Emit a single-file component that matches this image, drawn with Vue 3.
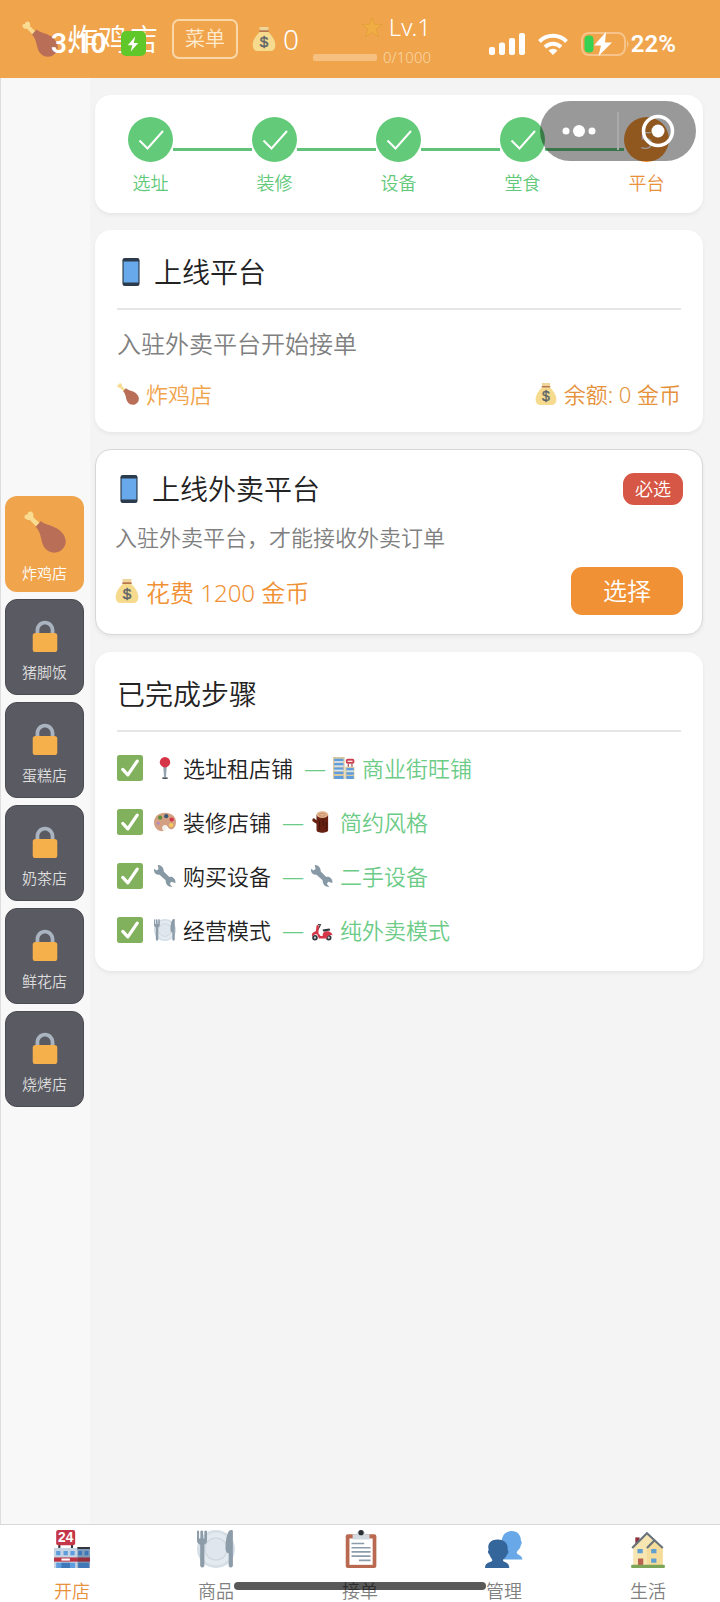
<script setup>
import { ref } from 'vue';

const shops = ref([
    { name: '炸鸡店', locked: false },
    { name: '猪脚饭', locked: true },
    { name: '蛋糕店', locked: true },
    { name: '奶茶店', locked: true },
    { name: '鲜花店', locked: true },
    { name: '烧烤店', locked: true },
]);

const steps = ref([
    { label: '选址', done: true },
    { label: '装修', done: true },
    { label: '设备', done: true },
    { label: '堂食', done: true },
    { label: '平台', done: false },
]);

const finished = ref([
    { icon: 'pin', title: '选址租店铺', choiceIcon: 'mall', choice: '商业街旺铺' },
    { icon: 'palette', title: '装修店铺', choiceIcon: 'wood', choice: '简约风格' },
    { icon: 'wrench', title: '购买设备', choiceIcon: 'wrench', choice: '二手设备' },
    { icon: 'plate', title: '经营模式', choiceIcon: 'scooter', choice: '纯外卖模式' },
]);

const tabs = [
    { icon: 'store', label: '开店' },
    { icon: 'plate', label: '商品' },
    { icon: 'clipboard', label: '接单' },
    { icon: 'people', label: '管理' },
    { icon: 'house', label: '生活' },
];
const activeTab = ref('开店');
</script>

<template>
    <svg class="sprite" aria-hidden="true">
        <symbol id="i-chicken" viewBox="0 0 36 36">
            <path fill="#f9dc92" d="M1 6.500C-.5 4.500 1 2.500 3 3c0-2.500 3-3.500 4.500-1.500 1.200 1.600.3 2.700.6 3.800L14 11l-3 3-6-6.300C3.700 7.500 2.300 8.200 1 6.500z"/>
            <path fill="#b96f57" d="M10 13.500l4.500-5c3 3 8 3.300 13 6 7.500 4 10.500 11.500 6.500 17-4 5.500-12 5.500-16 .5C14 27 15.500 19 10 13.500z"/>
        </symbol>
        <symbol id="i-lock" viewBox="0 0 36 36">
            <path fill="#aab4c0" d="M18 3C12.477 3 8 7.477 8 13v10h4V13c0-3.313 2.686-6 6-6s6 2.687 6 6v10h4V13c0-5.523-4.477-10-10-10z"/>
            <path fill="#f5b04c" d="M31 33a3 3 0 0 1-3 3H8a3 3 0 0 1-3-3V19a3 3 0 0 1 3-3h20a3 3 0 0 1 3 3z"/>
        </symbol>
        <symbol id="i-money" viewBox="0 0 36 36">
            <path fill="#f0d59a" d="M11 0h14l-1 6H12z"/>
            <path fill="#f6da8e" d="M12 7h12c4 3 11 12 11 20 0 6-3 9-8 9H9c-5 0-8-3-8-9C1 19 8 10 12 7z"/>
            <path fill="#b9774f" d="M12 5h12a1 1 0 0 1 0 2.500H12A1 1 0 0 1 12 5z"/>
            <text x="18" y="30" text-anchor="middle" font-family="Liberation Sans" font-size="23" font-weight="400" fill="#5d6468" stroke="#5d6468" stroke-width=".6">$</text>
        </symbol>
        <symbol id="i-star" viewBox="0 0 36 36">
            <path fill="#f0ad42" stroke="#dc9a3b" stroke-width="1" stroke-linejoin="round" d="M18 2l4.200 11.500 12.300.5-9.700 7.500L28.500 34 18 27 7.500 34l3.700-12.500L1.500 14l12.300-.5z"/>
        </symbol>
        <symbol id="i-phone" viewBox="0 0 36 36">
            <rect x="7" width="22" height="36" rx="3" fill="#2b3b4c"/>
            <rect x="8.500" y="4.500" width="19" height="27" fill="#67a9ea"/>
        </symbol>
        <symbol id="i-check" viewBox="0 0 36 36">
            <rect width="36" height="36" rx="3.500" fill="#82b15d"/>
            <path fill="none" stroke="#fff" stroke-width="4.500" stroke-linecap="round" stroke-linejoin="round" d="M8 20l7 7.500L28 8.500"/>
        </symbol>
        <symbol id="i-pin" viewBox="0 0 36 36">
            <ellipse cx="18" cy="34.500" rx="5" ry="1.500" fill="#343b41"/>
            <path fill="#95a3ae" d="M15 14h6l-1.500 20h-3z"/>
            <circle cx="18" cy="8.500" r="8.500" fill="#d63548"/>
        </symbol>
        <symbol id="i-palette" viewBox="0 0 36 36">
            <path fill="#d3a084" d="M18 3C8 3 0 9 0 19c0 8 6 14 13 14 4 0 3-3 2-6-1-4 3-5 6-3 3 3 3 6 7 6 5 0 8-6 8-12C36 9 28 3 18 3z"/>
            <circle cx="10" cy="11" r="3.500" fill="#5c913b"/>
            <circle cx="20" cy="8.500" r="3.500" fill="#3c5a76"/>
            <circle cx="29" cy="14" r="3.500" fill="#d63548"/>
            <circle cx="28" cy="23" r="3.500" fill="#f4cc57"/>
            <circle cx="7" cy="20" r="2.500" fill="#b58ac0"/>
            <ellipse cx="17" cy="28" rx="4" ry="4" fill="#f4f0ee"/>
        </symbol>
        <symbol id="i-wrench" viewBox="0 0 36 36">
            <path fill="#8899a6" d="M6 0l1.500 6.500L4 9 0 6c-1 7 4 11 9 10l10 9c0 7 4 11 11 11l-4-5 2-3.500 7 2c1-7-5-11-10-10l-9-9C16 4 12 0 6 0z"/>
        </symbol>
        <symbol id="i-plate" viewBox="0 0 36 36">
            <circle cx="18" cy="18" r="18" fill="#d6dfe6"/>
            <circle cx="18" cy="18" r="15.500" fill="#e3eaf0"/>
            <circle cx="18" cy="18" r="11" fill="#ccd6dd"/>
            <circle cx="18" cy="18" r="10" fill="#dfe6ed"/>
            <path fill="#8d9ca9" d="M0 1q1-1 2 0v7h1.200V1q1.300-1 2.600 0v7H7V1q1.300-1 2.500 0v9c0 2-1 3-2.500 4v20q-2 3-4 0V14C1 13 0 12 0 10zM34 1v33q-2 3-4 0V22c-2 0-3-2-3-5 0-8 2-17 5-17 1 0 2 0 2 1z"/>
        </symbol>
        <symbol id="i-mall" viewBox="0 0 36 36">
            <path fill="#d8c8a0" d="M0 0h19v36H0zM20 16h15v20H20z"/>
            <path fill="#5f9dde" d="M2 3h15v4H2zM2 10h15v4H2zM2 17h15v4H2zM2 24h15v4H2zM2 31h15v5H2zM22 18h12v4H22zM22 25h12v4H22zM22 31h12v5H22z"/>
            <path fill="#d6e7f8" d="M2 7h15v2H2zM2 14h15v2H2zM2 21h15v2H2zM22 22h12v2H22z"/>
            <rect x="21" y="3" width="14" height="8" rx="3" fill="#cf3c4b"/>
            <path fill="#fff" d="M24 6h8v2h-8z"/>
            <path fill="#99545b" d="M24 11h2v5h-2zM30 11h2v5h-2z"/>
        </symbol>
        <symbol id="i-wood" viewBox="0 0 36 36">
            <path fill="#662113" d="M9 6h19v25c0 6-19 6-19 0V21l-6-4c-2-2 0-6 2-5l4 3z"/>
            <ellipse cx="18.500" cy="6" rx="9.500" ry="5.500" fill="#e3b28c"/>
            <ellipse cx="18.500" cy="6" rx="5" ry="2.500" fill="none" stroke="#b9805f"/>
            <path fill="none" stroke="#3f1109" stroke-width="1.500" d="M14 16v14M20 14v10M25 18v12"/>
        </symbol>
        <symbol id="i-scooter" viewBox="0 0 36 36">
            <circle cx="6.500" cy="30.500" r="4.500" fill="#30363b"/>
            <circle cx="29" cy="30.500" r="4.500" fill="#30363b"/>
            <circle cx="6.500" cy="30.500" r="1.800" fill="#ccd6dd"/>
            <circle cx="29" cy="30.500" r="1.800" fill="#ccd6dd"/>
            <path fill="none" stroke="#30363b" stroke-width="1.800" stroke-linecap="round" d="M12 9l3.500.500-4 7.500"/>
            <path fill="#d63548" d="M9 11q2-2 4 0l-1 12 3.500 5H19c0-5 2-8 7-8 5 0 9 3 9 7-4-2-9 0-9 5H13l-3-7c-4 0-6 1-8 4-2-5 2-8 6-9z"/>
            <path fill="#30363b" d="M19 17l11-1.500q2 1 1 3.500l-9 1.500c-2 0-3-2-3-3.500z"/>
        </symbol>
        <symbol id="i-store" viewBox="0 0 36 36">
            <path fill="#31373d" d="M5 14h2v4H5zM17 14h2v4h-2zM23 16h12v3H23z"/>
            <rect x="3" width="18" height="14.500" rx="2" fill="#c4374a"/>
            <text x="12" y="11.800" text-anchor="middle" font-family="Liberation Sans" font-size="13" font-weight="700" fill="#fff">24</text>
            <path fill="#c4d4e4" d="M1 17h22v19H1z"/>
            <path fill="#7f9cba" d="M23 18h12v18H23z"/>
            <path fill="#5e9ddd" d="M3 20h4v4H3zM10 20h4v4h-4zM16.500 20h4v4h-4zM3 31h18v5H3z"/>
            <path fill="#3f78b8" d="M24 20h3.500v4H24zM30 20h3.500v4H30zM24 31h10v5H24zM8 31h8v5H8z"/>
            <path fill="#bd3344" d="M1 26h22v4H1z"/>
            <path fill="#982f3d" d="M23 26h12v4H23z"/>
            <rect x="8" y="27" width="8" height="2" fill="#fff"/>
        </symbol>
        <symbol id="i-clipboard" viewBox="0 0 36 36">
            <rect x="4.500" y="4" width="29" height="32" rx="2" fill="#b9694f"/>
            <path fill="#fff" d="M8 8h22v25H8z"/>
            <path fill="#d3dbe1" d="M11 4h4c0-5 8-5 8 0h4v5H11z"/>
            <circle cx="19" cy="2.500" r="2.500" fill="#292f33"/>
            <path fill="#8d9ca9" d="M10 12h12v1.500H10zM10 16h18v1.500H10zM10 20h18v1.500H10zM10 24h18v1.500H10zM17 28h11v1.500H17z"/>
        </symbol>
        <symbol id="i-people" viewBox="0 0 36 36">
            <path fill="#68a8e8" d="M25 1c6 0 9 4 9 9 1 1 1 3 0 4-.5 4-3 5-4 7 0 3 5 2 5.500 7H18V14h-2c-1-7 2-13 9-13z"/>
            <path fill="#35669b" d="M12 9c7 0 10 4 9.500 10 1 1 1 3-.5 4-1 3-3 4-4 5.500 0 3 6 1 6 7.500H0c0-6.500 7-4.500 7-7.500-1-1.500-2-3-3-5.500-1.500-1-1.500-3-.5-4C2 13 5 9 12 9z"/>
        </symbol>
        <symbol id="i-house" viewBox="0 0 36 36">
            <path fill="#8c3040" d="M6 7h4v8H6z"/>
            <path fill="#f7e5b2" d="M4 17L17 4l15 13v17H4z"/>
            <path fill="#f6dc9a" d="M17 17l7-7 8 7v17H17z"/>
            <path fill="none" stroke="#68737c" stroke-width="2" d="M3 17L17 3l15 14M17 17l7-7"/>
            <path fill="#5f9fd2" d="M8 18h5v4H8zM21 18h5v4h-5zM21 27h5v4h-5z"/>
            <path fill="#b9624f" d="M8.500 27h5v7h-5z"/>
            <rect x="2" y="33" width="32" height="3" rx="1" fill="#7da557"/>
        </symbol>
        <symbol id="i-bolt" viewBox="0 0 24 24">
            <path fill="#fff" d="M15 2L5 13.500h6L9 22l10-11.500h-6z"/>
        </symbol>
    </svg>

    <div class="page">
        <header class="topbar">
            <div class="shop">
                <svg class="icon icon-36"><use href="#i-chicken" /></svg>
                <h1 class="shop-name">炸鸡店</h1>
            </div>
            <button class="menu-btn" type="button">菜单</button>
            <div class="coins">
                <svg class="icon icon-24"><use href="#i-money" /></svg>
                <span>0</span>
            </div>
            <div class="level">
                <div class="level-name">
                    <svg class="icon icon-22"><use href="#i-star" /></svg>
                    <span>Lv.1</span>
                </div>
                <div class="level-exp">
                    <span class="exp-bar"></span>
                    <span>0/1000</span>
                </div>
            </div>
        </header>

        <!-- phone status bar lies over the top bar -->
        <div class="status">
            <div class="status-side">
                <span class="time">3:10</span>
                <span class="charge"><svg class="icon icon-18"><use href="#i-bolt" /></svg></span>
            </div>
            <div class="status-side">
                <svg class="signal" viewBox="0 0 36 22">
                    <path fill="#fff" d="M2 14h2a2 2 0 0 1 2 2v4a2 2 0 0 1-2 2H2a2 2 0 0 1-2-2v-4a2 2 0 0 1 2-2zM12 9.500h2a2 2 0 0 1 2 2V20a2 2 0 0 1-2 2h-2a2 2 0 0 1-2-2v-8.500a2 2 0 0 1 2-2zM22 5h2a2 2 0 0 1 2 2v13a2 2 0 0 1-2 2h-2a2 2 0 0 1-2-2V7a2 2 0 0 1 2-2zM32 0h2a2 2 0 0 1 2 2v18a2 2 0 0 1-2 2h-2a2 2 0 0 1-2-2V2a2 2 0 0 1 2-2z"/>
                </svg>
                <svg class="wifi" viewBox="0 0 30 22">
                    <path fill="none" stroke="#fff" stroke-width="4" d="M1.500 8.500a19 19 0 0 1 27 0M7 14a11.500 11.500 0 0 1 16 0"/>
                    <path fill="#fff" d="M10.500 17.500a6.500 6.500 0 0 1 9 0L15 22z"/>
                </svg>
                <svg class="battery" viewBox="0 0 48 24">
                    <rect x="1" y="1" width="43" height="22" rx="7" fill="none" stroke="#f6c48b" stroke-width="2"/>
                    <path fill="#f6c48b" d="M46 8q3 4 0 8z"/>
                    <rect x="3.500" y="3.500" width="9" height="17" rx="4" fill="#35d153"/>
                    <path fill="#fff" d="M25 0L13 13.500h7L17.500 24 31 10.500h-7z"/>
                </svg>
                <span class="percent">22%</span>
            </div>
        </div>

        <div class="capsule">
            <button class="capsule-btn" type="button" aria-label="更多">
                <svg width="34" height="12" viewBox="0 0 34 12" fill="#fff">
                    <circle cx="4" cy="6" r="3.500"/><circle cx="17" cy="6" r="6"/><circle cx="30" cy="6" r="3.500"/>
                </svg>
            </button>
            <button class="capsule-btn capsule-close" type="button" aria-label="关闭">
                <svg width="34" height="34" viewBox="0 0 34 34">
                    <circle cx="17" cy="17" r="14.500" fill="none" stroke="#fff" stroke-width="3.500"/>
                    <circle cx="17" cy="17" r="6.500" fill="#fff"/>
                </svg>
            </button>
        </div>

        <div class="body">
            <aside class="sidebar">
                <button v-for="shop in shops" :key="shop.name" type="button" class="tile" :class="shop.locked ? 'tile--locked' : ''">
                    <svg v-if="shop.locked" class="icon icon-34"><use href="#i-lock" /></svg>
                    <svg v-else class="icon icon-42"><use href="#i-chicken" /></svg>
                    <span>{{ shop.name }}</span>
                </button>
            </aside>

            <main class="content">
                <section class="card steps">
                    <template v-for="(step, index) in steps" :key="step.label">
                        <span v-if="index > 0" class="step-line"></span>
                        <div class="step" :class="step.done ? '' : 'step--current'">
                            <div class="step-dot">
                                <svg v-if="step.done" width="26" height="20" viewBox="0 0 26 20">
                                    <path fill="none" stroke="#fff" stroke-width="2" d="M1.500 10.500l8 8L25 1"/>
                                </svg>
                                <span v-else>{{ index + 1 }}</span>
                            </div>
                            <span class="step-label">{{ step.label }}</span>
                        </div>
                    </template>
                </section>

                <section class="card">
                    <h2 class="card-title card-title--line">
                        <svg class="icon icon-28"><use href="#i-phone" /></svg>
                        上线平台
                    </h2>
                    <p class="intro">入驻外卖平台开始接单</p>
                    <div class="row summary">
                        <span class="with-icon orange-light"><svg class="icon icon-22"><use href="#i-chicken" /></svg>炸鸡店</span>
                        <span class="with-icon orange"><svg class="icon icon-22"><use href="#i-money" /></svg>余额: 0 金币</span>
                    </div>
                </section>

                <section class="card card--option">
                    <div class="row">
                        <h2 class="card-title">
                            <svg class="icon icon-28"><use href="#i-phone" /></svg>
                            上线外卖平台
                        </h2>
                        <span class="badge">必选</span>
                    </div>
                    <p class="desc">入驻外卖平台，才能接收外卖订单</p>
                    <div class="row">
                        <span class="with-icon price"><svg class="icon icon-24"><use href="#i-money" /></svg>花费 1200 金币</span>
                        <button class="choose" type="button">选择</button>
                    </div>
                </section>

                <section class="card">
                    <h2 class="card-title card-title--line">已完成步骤</h2>
                    <ul class="finished">
                        <li v-for="item in finished" :key="item.title">
                            <svg class="icon icon-26"><use href="#i-check" /></svg>
                            <span class="with-icon"><svg class="icon icon-22"><use :href="'#i-' + item.icon" /></svg>{{ item.title }}</span>
                            <span class="with-icon green">—<svg class="icon icon-22"><use :href="'#i-' + item.choiceIcon" /></svg>{{ item.choice }}</span>
                        </li>
                    </ul>
                </section>
            </main>
        </div>

        <nav class="tabbar">
            <button
                v-for="tab in tabs"
                :key="tab.label"
                type="button"
                class="tab"
                :class="tab.label === activeTab ? 'tab--active' : ''"
                @click="activeTab = tab.label"
            >
                <svg class="icon icon-38"><use :href="'#i-' + tab.icon" /></svg>
                <span>{{ tab.label }}</span>
            </button>
            <span class="home-indicator"></span>
        </nav>
    </div>
</template>

<style>
body {
    background: #f4f4f4;
}
</style>

<style scoped>
.sprite {
    display: none;
}

.page {
    position: relative;
    display: flex;
    flex-direction: column;
    min-height: 100vh;
    background: #f4f4f4;
    color: #222;
    font-family: "Noto Sans", "Noto Sans CJK SC", sans-serif;
    font-weight: 350;
}

h1, h2, p, ul {
    margin: 0;
    padding: 0;
    font-weight: inherit;
}

button {
    margin: 0;
    padding: 0;
    border: 0;
    background: none;
    color: inherit;
    font: inherit;
    cursor: pointer;
}

.icon { flex: none; display: block; }
.icon-18 { width: 18px; height: 18px; }
.icon-22 { width: 22px; height: 22px; }
.icon-24 { width: 24px; height: 24px; }
.icon-26 { width: 26px; height: 26px; }
.icon-28 { width: 28px; height: 28px; }
.icon-34 { width: 34px; height: 34px; }
.icon-36 { width: 36px; height: 36px; }
.icon-38 { width: 38px; height: 38px; }
.icon-42 { width: 42px; height: 42px; }

.topbar {
    display: flex;
    align-items: center;
    gap: 14px;
    height: 78px;
    padding: 0 22px;
    background: #f0a44c;
    color: #fff;
    box-sizing: border-box;
}

.shop {
    display: flex;
    align-items: center;
    gap: 10px;
}

.shop-name {
    font-size: 30px;
    line-height: 40px;
}

.menu-btn {
    height: 40px;
    padding: 0 11px;
    border: 2px solid #f9d7a8;
    border-radius: 7px;
    color: #fdebd0;
    font-size: 20px;
    line-height: 34px;
}

.coins {
    display: flex;
    align-items: center;
    gap: 7px;
    font-size: 28px;
    line-height: 40px;
}

.level {
    display: flex;
    flex-direction: column;
    align-items: flex-end;
}

.level-name {
    display: flex;
    align-items: center;
    gap: 6px;
    font-size: 24px;
    line-height: 36px;
}

.level-exp {
    display: flex;
    align-items: center;
    gap: 6px;
    color: #f9d7a8;
    font-size: 15px;
    line-height: 24px;
}

.exp-bar {
    width: 64px;
    height: 7px;
    background: #f5c080;
    border-radius: 2px;
}

.status {
    position: absolute;
    top: 0;
    left: 0;
    right: 0;
    display: flex;
    justify-content: space-between;
    height: 87px;
    padding: 0 44px 0 51px;
    color: #fff;
    font-family: Roboto, sans-serif;
    font-weight: 600;
    pointer-events: none;
}

.status-side {
    display: flex;
    align-items: center;
}

.time {
    margin-right: 14px;
    font-size: 28px;
}

.charge {
    display: flex;
    align-items: center;
    justify-content: center;
    width: 25px;
    height: 25px;
    border-radius: 5px;
    background: #60c72a;
}

.signal {
    width: 36px;
    height: 22px;
    margin-right: 13px;
}

.wifi {
    width: 30px;
    height: 22px;
    margin-right: 13px;
}

.battery {
    width: 48px;
    height: 24px;
    margin-right: 2px;
}

.percent {
    font-size: 24px;
}

.capsule {
    position: absolute;
    top: 101px;
    right: 24px;
    display: flex;
    align-items: center;
    width: 156px;
    height: 60px;
    border-radius: 30px;
    background: rgba(0, 0, 0, 0.4);
}

.capsule-btn {
    display: flex;
    flex: 1;
    align-items: center;
    justify-content: center;
    height: 38px;
}

.capsule-close {
    border-left: 2px solid #aaa;
}

.body {
    flex: 1;
    display: flex;
}

.sidebar {
    display: flex;
    flex-direction: column;
    justify-content: center;
    gap: 7px;
    width: 90px;
    padding: 0 6px 0 4px;
    border-left: 1px solid #ddd;
    background: #f8f8f8;
    box-sizing: border-box;
}

.tile {
    display: flex;
    flex-direction: column;
    align-items: center;
    justify-content: center;
    gap: 10px;
    height: 96px;
    padding-top: 6px;
    border-radius: 12px;
    background: #f0a44c;
    color: #fff;
    font-size: 15px;
    line-height: 20px;
    box-sizing: border-box;
}

.tile--locked {
    border: 1px solid #4b4b52;
    background: #5a5a62;
    color: #ddd;
}

.content {
    flex: 1;
    display: flex;
    flex-direction: column;
    gap: 17px;
    padding: 17px 17px 17px 5px;
}

.card {
    padding: 22px;
    border-radius: 16px;
    background: #fff;
    box-shadow: 0 2px 4px rgba(0, 0, 0, 0.06);
}

.card--option {
    padding: 19px;
    border: 1px solid #d8d8d8;
}

.steps {
    display: flex;
    padding: 22px 34px 18px 33px;
}

.step {
    display: flex;
    flex-direction: column;
    align-items: center;
    gap: 9px;
    width: 45px;
    color: #62c97a;
}

.step-dot {
    display: flex;
    align-items: center;
    justify-content: center;
    width: 45px;
    height: 45px;
    border-radius: 50%;
    background: #62ca78;
    color: #fff;
    font-size: 24px;
}

.step-label {
    font-size: 18px;
    line-height: 24px;
}

.step--current {
    color: #e8903a;
}

.step--current .step-dot {
    background: #f09135;
}

.step-line {
    flex: 1;
    height: 3px;
    margin-top: 31px;
    background: #62c27a;
}

.card-title {
    display: flex;
    align-items: center;
    gap: 9px;
    font-size: 28px;
    line-height: 40px;
}

.card-title--line {
    padding-bottom: 16px;
    border-bottom: 2px solid #e6e6e6;
}

.intro {
    margin-top: 16px;
    color: #808080;
    font-size: 24px;
    line-height: 36px;
}

.row {
    display: flex;
    align-items: center;
    justify-content: space-between;
}

.summary {
    margin-top: 16px;
    font-size: 22px;
    line-height: 32px;
}

.with-icon {
    display: flex;
    align-items: center;
    gap: 7px;
}

.orange { color: #e5923c; }
.orange-light { color: #f0a44c; }
.green { color: #6ccb86; }

.badge {
    padding: 0 12px;
    border-radius: 11px;
    background: #d65745;
    color: #fff;
    font-size: 18px;
    line-height: 32px;
}

.desc {
    margin: 12px 0 14px;
    color: #808080;
    font-size: 22px;
    line-height: 32px;
}

.price {
    color: #f09135;
    font-size: 24px;
}

.choose {
    padding: 0 32px;
    border-radius: 11px;
    background: #f09135;
    color: #fff;
    font-size: 24px;
    line-height: 48px;
}

.finished {
    display: flex;
    flex-direction: column;
    gap: 16px;
    margin-top: 17px;
    list-style: none;
}

.finished li {
    display: flex;
    align-items: center;
    gap: 11px;
    font-size: 22px;
    line-height: 38px;
}

.tabbar {
    position: relative;
    display: flex;
    border-top: 1px solid #d8d8d8;
    background: #fff;
}

.tab {
    flex: 1;
    display: flex;
    flex-direction: column;
    align-items: center;
    gap: 12px;
    padding-top: 5px;
    color: #808080;
    font-size: 18px;
    line-height: 22px;
}

.tab--active {
    color: #e8903a;
}

.home-indicator {
    position: absolute;
    bottom: 12px;
    left: 50%;
    width: 35%;
    height: 8px;
    border-radius: 4px;
    background: rgba(0, 0, 0, 0.65);
    transform: translateX(-50%);
}
</style>
